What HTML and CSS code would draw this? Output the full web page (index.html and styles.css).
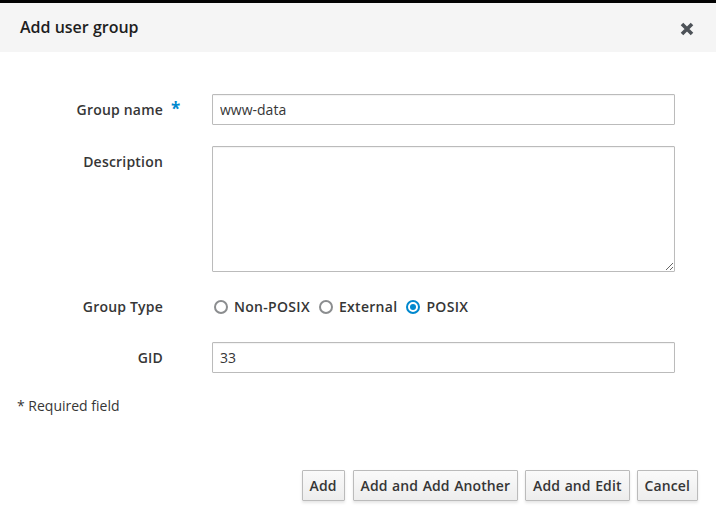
FILE: index.html
```html
<!DOCTYPE html>
<html>
<head>
<meta charset="utf-8">
<link rel="stylesheet" href="styles.css">
</head>
<body>
<div class="modal">
  <div class="modal-header">
    <h4 class="modal-title">Add user group</h4>
    <button class="close" aria-label="Close">
      <svg width="14" height="14" viewBox="0 0 14 14"><path d="M2 2 L12 12 M12 2 L2 12" stroke="#4d5258" stroke-width="3.6" stroke-linecap="butt"/></svg>
    </button>
  </div>
  <div class="modal-body">
    <form class="form">
      <div class="row">
        <label class="label required">Group name</label>
        <div class="control"><input class="input" type="text" value="www-data"></div>
      </div>
      <div class="row row-top">
        <label class="label">Description</label>
        <div class="control"><textarea class="textarea"></textarea></div>
      </div>
      <div class="row">
        <label class="label">Group Type</label>
        <div class="control radios">
          <label class="radio"><span class="circle"></span>Non-POSIX</label>
          <label class="radio"><span class="circle"></span>External</label>
          <label class="radio"><span class="circle checked"></span>POSIX</label>
        </div>
      </div>
      <div class="row">
        <label class="label">GID</label>
        <div class="control"><input class="input" type="text" value="33"></div>
      </div>
    </form>
    <div class="required-note">* Required field</div>
  </div>
  <div class="modal-footer">
    <button class="btn">Add</button>
    <button class="btn">Add and Add Another</button>
    <button class="btn">Add and Edit</button>
    <button class="btn">Cancel</button>
  </div>
</div>
</body>
</html>
```
FILE: styles.css
```css
* { box-sizing: border-box; }
html, body { margin: 0; padding: 0; background: #fff; }
body {
  font-family: "Open Sans", "Noto Sans", sans-serif;
  font-size: 14px;
  color: #363636;
  width: 716px;
  height: 519px;
  overflow: hidden;
}
.modal {
  border-top: 3px solid #030303;
  height: 519px;
  display: flex;
  flex-direction: column;
}
.modal-header {
  background: #f5f5f5;
  height: 49px;
  display: flex;
  align-items: center;
  justify-content: space-between;
  padding: 0 22px 0 20px;
}
.modal-title {
  margin: 0;
  font-size: 16px;
  font-weight: 600;
  font-stretch: 90%;
  color: #1e1e1e;
  line-height: 20px;
  padding-bottom: 1px;
}
.close {
  border: 0;
  background: none;
  padding: 0;
  width: 14px;
  height: 14px;
  display: flex;
  margin-top: 3px;
}
.modal-body {
  padding: 42px 41px 0 17px;
}
.form {
  display: flex;
  flex-direction: column;
  gap: 21px;
}
.row {
  display: flex;
  align-items: center;
}
.row-top { align-items: flex-start; }
.label {
  width: 146px;
  text-align: right;
  font-weight: 600;
  color: #363636;
  position: relative;
  line-height: 20px;
  margin-right: 49px;
  letter-spacing: 0.2px;
}
.row-top .label { margin-top: 6px; }
.required::after {
  content: "*";
  color: #0088ce;
  position: absolute;
  left: 154px;
  top: -1px;
  font-size: 17px;
  font-weight: 700;
}
.control { flex: 1; }
.input {
  display: block;
  width: 100%;
  height: 31px;
  border: 1px solid #bbb;
  border-radius: 1px;
  font-family: inherit;
  font-size: 14px;
  color: #363636;
  padding: 0 7px;
  background: #fff;
  box-shadow: inset 0 1px 1px rgba(3,3,3,0.05);
}
.textarea {
  display: block;
  width: 100%;
  height: 126px;
  border: 1px solid #bbb;
  border-radius: 1px;
  font-family: inherit;
  font-size: 14px;
  margin: 0;
  resize: both;
  box-shadow: inset 0 1px 1px rgba(3,3,3,0.05);
}
.radios {
  display: flex;
  align-items: center;
  height: 28px;
  padding-left: 2px;
}
.radio {
  display: flex;
  align-items: center;
  margin-right: 9px;
  font-weight: 600;
  color: #363636;
  line-height: 20px;
  letter-spacing: 0.3px;
}
.circle {
  width: 14px;
  height: 14px;
  border: 2px solid #8b8d8f;
  border-radius: 50%;
  margin-right: 6px;
  display: inline-flex;
  align-items: center;
  justify-content: center;
}
.circle.checked {
  border-color: #0088ce;
}
.circle.checked::after {
  content: "";
  width: 6px;
  height: 6px;
  border-radius: 50%;
  background: #0088ce;
}
.required-note {
  margin-top: 23px;
  line-height: 20px;
  color: #363636;
}
.modal-footer {
  margin-top: auto;
  display: flex;
  justify-content: flex-end;
  gap: 7px;
  padding: 0 18px 18px 0;
}
.btn {
  height: 31px;
  padding: 0 7px;
  font-family: inherit;
  font-size: 14px;
  font-weight: 600;
  color: #363636;
  border: 1px solid #bbb;
  border-radius: 1px;
  background: linear-gradient(#fafafa, #ededed);
  box-shadow: 0 2px 3px rgba(3,3,3,0.1);
  letter-spacing: 0.1px;
  word-spacing: 0.8px;
}
.btn:first-child { margin-right: 1px; }
```
